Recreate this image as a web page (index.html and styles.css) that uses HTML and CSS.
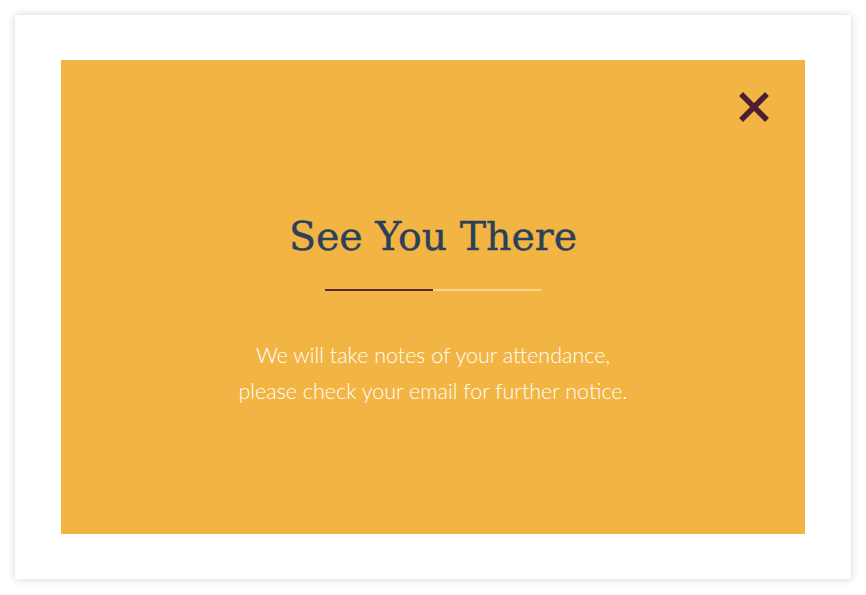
FILE: index.html
```html
<!DOCTYPE html>
<html>
<head>
<meta charset="utf-8">
<link rel="stylesheet" href="styles.css">
</head>
<body>
<div class="card">
  <div class="panel">
    <button class="close" aria-label="Close">
      <svg width="30" height="30" viewBox="0 0 30 30"><path d="M4 4 L26 26 M26 4 L4 26" stroke="#4b1e33" stroke-width="5.5" stroke-linecap="square" fill="none"/></svg>
    </button>
    <h1 class="title">See You There</h1>
    <div class="divider"><span class="dark"></span><span class="light"></span></div>
    <p class="text">We will take notes of your attendance,<br>please check your email for further notice.</p>
  </div>
</div>
</body>
</html>
```
FILE: styles.css
```css
html, body { margin: 0; padding: 0; background: #fff; }
body { padding: 15px; width: 836px; }
.card {
  background: #fff;
  width: 836px;
  height: 564px;
  box-sizing: border-box;
  padding: 45px 46px 45px 46px;
  box-shadow: 0 0 8px rgba(0,0,0,0.18);
}
.panel {
  position: relative;
  background: #f2b544;
  height: 474px;
  display: flex;
  flex-direction: column;
  align-items: center;
}
.close {
  position: absolute;
  right: 36px;
  top: 32px;
  background: none;
  border: 0;
  padding: 0;
  width: 30px;
  height: 30px;
}
.close svg { display: block; }
.title {
  margin: 150px 0 0;
  font-family: "DejaVu Serif", serif;
  font-weight: normal;
  font-size: 39.5px;
  line-height: 52px;
  color: #2c3f5b;
  -webkit-text-stroke: 0.4px #2c3f5b;
}
.divider {
  margin-top: 27px;
  display: flex;
  width: 216px;
  height: 2px;
}
.divider .dark { flex: 1; background: #5a2632; }
.divider .light { flex: 1; background: #fbd58e; }
.text {
  margin: 46px 0 0;
  font-family: "Lato", sans-serif;
  font-weight: 300;
  font-size: 21.5px;
  line-height: 36px;
  color: #fff;
  text-align: center;
}
```
